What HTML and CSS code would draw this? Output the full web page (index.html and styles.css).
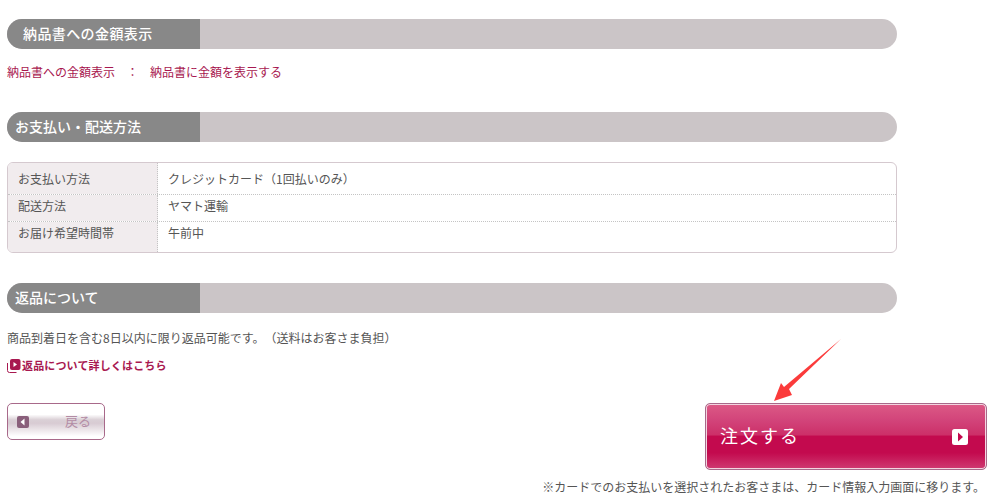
FILE: index.html
```html
<!DOCTYPE html>
<html lang="ja">
<head>
    <meta charset="UTF-8">
    <title>ご注文内容の確認</title>
    <link rel="stylesheet" href="styles.css">
</head>
<body>
    <div class="wrap">
        <h2 class="bar"><span class="bar-label bar-label-wide">納品書への金額表示</span></h2>
        <p class="invoice">納品書への金額表示<span class="sep">：</span>納品書に金額を表示する</p>

        <h2 class="bar"><span class="bar-label">お支払い・配送方法</span></h2>
        <div class="info">
            <div class="info-row">
                <div class="info-head">お支払い方法</div>
                <div class="info-body">クレジットカード（1回払いのみ）</div>
            </div>
            <div class="info-row">
                <div class="info-head">配送方法</div>
                <div class="info-body">ヤマト運輸</div>
            </div>
            <div class="info-row">
                <div class="info-head">お届け希望時間帯</div>
                <div class="info-body">午前中</div>
            </div>
        </div>

        <h2 class="bar"><span class="bar-label">返品について</span></h2>
        <p class="returns">商品到着日を含む8日以内に限り返品可能です。（送料はお客さま負担）</p>
        <a class="more" href="#">
            <svg class="more-icon" width="14" height="14" viewBox="0 0 14 14">
                <path d="M0.5 4v7.5q0 2 2 2h7" fill="none" stroke="#a81850"/>
                <rect x="3" y="0" width="10.5" height="11" rx="2" fill="#a81850"/>
                <path d="M6.5 3l3.5 2.5-3.5 2.5z" fill="#fff"/>
            </svg>返品について詳しくはこちら</a>

        <div class="actions">
            <a class="btn-back" href="#">
                <svg width="12" height="12" viewBox="0 0 12 12">
                    <rect width="12" height="12" rx="2" fill="#8a5f7b"/>
                    <path d="M7.5 2.5L3.5 6l4 3.5z" fill="#fff"/>
                </svg>
                <span>戻る</span>
            </a>
            <a class="btn-order" href="#">
                <span>注文する</span>
                <svg width="16" height="16" viewBox="0 0 16 16">
                    <rect width="16" height="16" rx="2.5" fill="#fff"/>
                    <path d="M6 3.5l5 4.5-5 4.5z" fill="#c30a4e"/>
                </svg>
            </a>
        </div>
        <p class="note">※カードでのお支払いを選択されたお客さまは、カード情報入力画面に移ります。</p>
    </div>

    <svg class="arrow" width="70" height="66" viewBox="0 0 70 66">
        <path d="M68 1L16 51 19 57 1 63 8 45 11 49z" fill="#fb3b3b"/>
    </svg>
</body>
</html>
```

FILE: styles.css
```css
body {
    margin: 0;
    font-family: "Noto Sans CJK JP", "Noto Sans", sans-serif;
    font-size: 12px;
    color: #555;
    background: white;
    text-spacing-trim: space-all;
}
.wrap {
    padding: 19px 1px 0 7px;
}
p {
    margin: 0;
}
.bar {
    width: 890px;
    height: 30px;
    margin: 0;
    background: #cbc5c7;
    border-radius: 15px;
    overflow: hidden;
}
.bar-label {
    display: block;
    box-sizing: border-box;
    width: 193px;
    height: 30px;
    padding-left: 8px;
    background: #888;
    color: white;
    font-size: 14px;
    font-weight: 500;
    line-height: 28px;
}
.bar-label-wide {
    padding-left: 16px;
    letter-spacing: 0.4px;
}
.invoice {
    height: 18px;
    margin: 14px 0 31px;
    line-height: 18px;
    color: #a81850;
}
.sep {
    display: inline-block;
    width: 35px;
    text-align: center;
}
.info {
    width: 890px;
    box-sizing: border-box;
    margin: 20px 0 30px;
    border: 1px solid #d5c9cf;
    border-radius: 6px;
    overflow: hidden;
}
.info-row {
    display: flex;
    height: 27px;
    border-bottom: 1px dotted #c4c4c4;
    box-sizing: border-box;
}
.info-row:first-child {
    height: 32px;
}
.info-row:last-child {
    height: 30px;
    border-bottom: none;
}
.info-head {
    width: 150px;
    box-sizing: border-box;
    padding: 2px 10px 0;
    background: #f1ecee;
    border-right: 1px dotted #c4c4c4;
    line-height: 18px;
}
.info-body {
    flex: 1;
    padding: 2px 10px 0;
    line-height: 18px;
}
.info-row:first-child .info-head,
.info-row:first-child .info-body {
    padding-top: 7px;
}
.returns {
    height: 18px;
    margin-top: 16px;
    line-height: 18px;
}
.more {
    display: flex;
    align-items: center;
    height: 18px;
    margin-top: 9px;
    color: #a81850;
    font-size: 11px;
    font-weight: 700;
    letter-spacing: 0.15px;
    text-decoration: none;
    line-height: 18px;
}
.more-icon {
    margin: 1px 1px 0 0;
}
.actions {
    display: flex;
    justify-content: space-between;
    align-items: flex-start;
    margin-top: 29px;
}
.btn-back {
    display: flex;
    align-items: center;
    justify-content: space-between;
    box-sizing: border-box;
    width: 98px;
    height: 37px;
    padding: 0 13px 0 9px;
    border: 1px solid #a8698a;
    border-radius: 5px;
    background: linear-gradient(#fff 0, #fff 30%, #dad0d6 45%, #d8cbd3 55%, #fff 92%);
    color: #b38ca5;
    font-size: 13px;
    text-decoration: none;
}
.btn-back span {
    padding-bottom: 3px;
}
.btn-order {
    display: flex;
    align-items: center;
    justify-content: space-between;
    box-sizing: border-box;
    width: 282px;
    height: 67px;
    padding: 0 18px 0 14px;
    border: 1px solid #a8698a;
    border-radius: 5px;
    box-shadow: inset 0 0 0 1px #f3d5e0;
    background: linear-gradient(#dc5a86 0, #d2447a 25%, #cc2f68 48%, #c30a4e 49%, #c30a4e 75%, #cf3a72 100%);
    color: white;
    font-size: 18px;
    letter-spacing: 2px;
    text-decoration: none;
}
.btn-order span {
    padding-bottom: 4px;
}
.note {
    margin-top: 8px;
    padding-right: 2px;
    text-align: right;
    line-height: 18px;
}
/* annotation drawn on top of the screenshot */
.arrow {
    position: absolute;
    left: 773px;
    top: 338px;
}
```
